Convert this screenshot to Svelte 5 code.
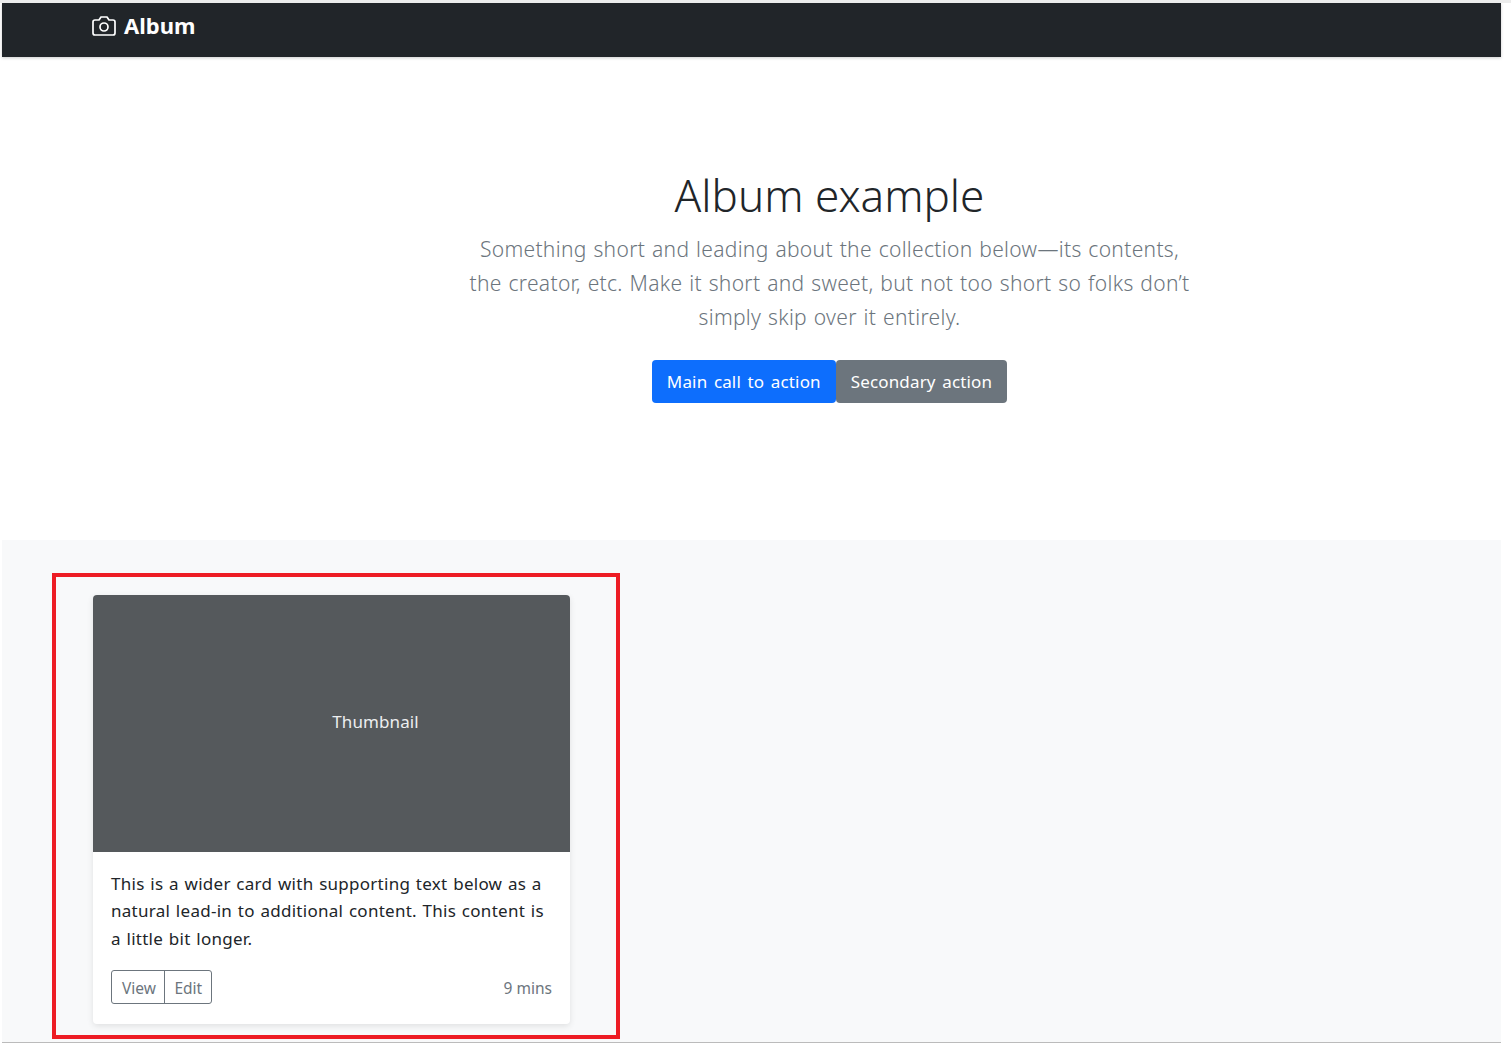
<script>
  const card = {
    text: 'This is a wider card with supporting text below as a natural lead-in to additional content. This content is a little bit longer.',
    time: '9 mins'
  }
</script>

<div class="page">
  <header class="navbar">
    <a class="brand" href="#top">
      <svg class="camera" viewBox="0 0 24 24" width="24" height="24" fill="none" stroke="currentColor" stroke-width="2" stroke-linecap="round" stroke-linejoin="round">
        <path d="M23 19a2 2 0 0 1-2 2H3a2 2 0 0 1-2-2V8a2 2 0 0 1 2-2h4l2-3h6l2 3h4a2 2 0 0 1 2 2z" />
        <circle cx="12" cy="13" r="4" />
      </svg>
      <strong>Album</strong>
    </a>
  </header>

  <main>
    <section class="hero">
      <div class="hero-inner">
        <h1>Album example</h1>
        <p class="lead">Something short and leading about the collection below—its contents, the creator, etc. Make it short and sweet, but not too short so folks don’t simply skip over it entirely.</p>
        <div class="actions">
          <a class="btn primary" href="#top">Main call to action</a>
          <a class="btn secondary" href="#top">Secondary action</a>
        </div>
      </div>
    </section>

    <section class="album">
      <div class="highlight"></div>
      <article class="card">
        <div class="thumb"><span>Thumbnail</span></div>
        <div class="card-body">
          <p>{card.text}</p>
          <div class="card-foot">
            <div class="group">
              <button type="button">View</button>
              <button type="button">Edit</button>
            </div>
            <small>{card.time}</small>
          </div>
        </div>
      </article>
    </section>
  </main>
</div>

<style>
  :global(body) {
    margin: 0;
    background: #fff;
  }

  .page {
    position: relative;
    height: 1043px;
    box-sizing: border-box;
    padding: 3px 10px 0 2px;
    font-family: "Noto Sans", "Open Sans", sans-serif;
    color: #212529;
    overflow: hidden;
  }

  .page::before {
    content: '';
    position: absolute;
    inset: 0 0 auto 0;
    height: 3px;
    background: #ececec;
  }

  .navbar {
    height: 54px;
    box-sizing: border-box;
    padding: 0 0 9px 90px;
    display: flex;
    align-items: center;
    background: #212529;
    box-shadow: 0 1px 3px rgba(0, 0, 0, 0.2);
  }

  .brand {
    display: flex;
    align-items: center;
    gap: 8px;
    color: #fff;
    text-decoration: none;
    font-size: 22px;
  }

  .brand strong {
    margin-bottom: 2px;
  }

  .camera {
    width: 24px;
    height: 24px;
    stroke-width: 1.7;
  }

  .hero {
    height: 483px;
    box-sizing: border-box;
    padding: 111px 0 0 156px;
    display: flex;
    justify-content: center;
  }

  .hero-inner {
    width: 724px;
    text-align: center;
  }

  h1 {
    margin: 0 0 10px;
    font-size: 44px;
    font-weight: 300;
    line-height: 54px;
  }

  .lead {
    margin: 0 0 26px;
    font-size: 21px;
    font-weight: 300;
    line-height: 34px;
    letter-spacing: 0.32px;
    word-spacing: 1px;
    color: #6c757d;
  }

  .actions {
    display: flex;
    justify-content: center;
  }

  .btn {
    height: 43px;
    box-sizing: border-box;
    padding: 0 15px;
    display: flex;
    align-items: center;
    border-radius: 4px;
    color: #fff;
    font-size: 17px;
    letter-spacing: 0.15px;
    word-spacing: 2px;
    text-decoration: none;
  }

  .primary { background: #0d6efd; }
  .secondary { background: #6c757d; }

  .album {
    position: relative;
    height: 502px;
    box-sizing: border-box;
    padding: 55px 0 0 91px;
    background: #f8f9fa;
  }

  .highlight {
    position: absolute;
    left: 50px;
    top: 33px;
    width: 568px;
    height: 466px;
    box-sizing: border-box;
    border: 4px solid #ed1c24;
    pointer-events: none;
  }

  .card {
    width: 477px;
    height: 429px;
    display: flex;
    flex-direction: column;
    border-radius: 4px;
    overflow: hidden;
    background: #fff;
    box-shadow: 0 2px 6px rgba(0, 0, 0, 0.1);
  }

  .thumb {
    height: 257px;
    box-sizing: border-box;
    padding: 0 0 4px 88px;
    display: flex;
    align-items: center;
    justify-content: center;
    background: #55595c;
    color: #eceeef;
    font-size: 17px;
    letter-spacing: 0.1px;
  }

  .card-body {
    flex: 1;
    padding: 18px 18px 20px;
    display: flex;
    flex-direction: column;
    justify-content: space-between;
  }

  .card-body p {
    margin: 0;
    font-size: 17px;
    line-height: 27.3px;
    letter-spacing: 0.27px;
    word-spacing: 1px;
  }

  .card-foot {
    display: flex;
    align-items: center;
    justify-content: space-between;
  }

  .group {
    display: flex;
    height: 34px;
    box-sizing: border-box;
    border: 1px solid #6c757d;
    border-radius: 3px;
  }

  .group button {
    padding: 1px 8.5px 0 9px;
    border: 0;
    background: none;
    color: #6c757d;
    font: inherit;
    font-size: 15.5px;
  }

  .group button:first-child {
    padding-left: 10px;
  }

  .group button + button {
    border-left: 1px solid #6c757d;
  }

  small {
    padding-top: 2px;
    font-size: 15.5px;
    color: #6c757d;
  }

  main {
    border-bottom: 1px solid #bbb;
  }
</style>
